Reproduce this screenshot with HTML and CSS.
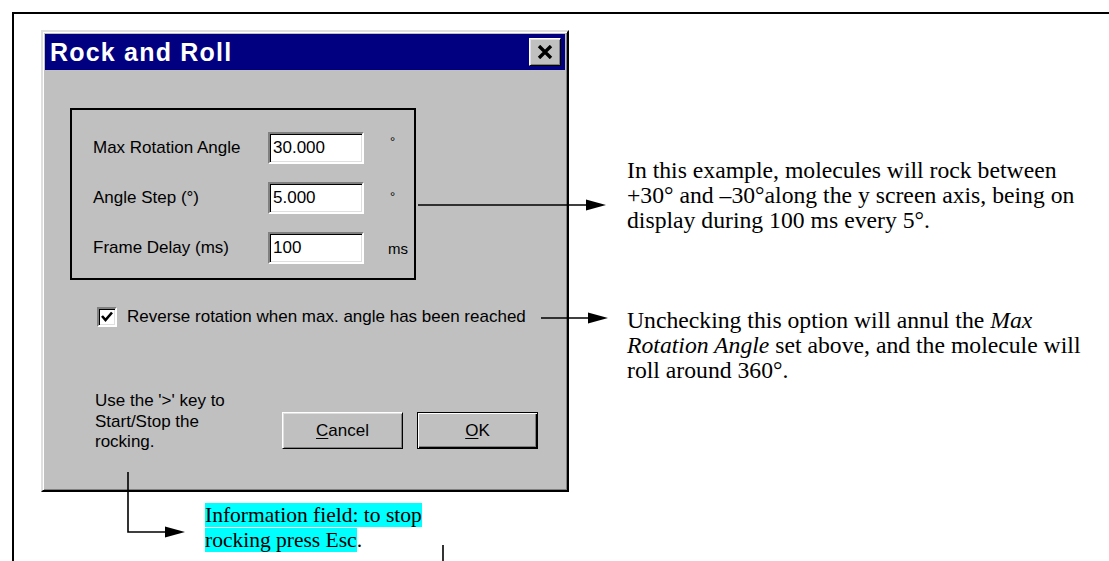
FILE: index.html
```html
<!DOCTYPE html>
<html lang="en">
<head>
  <meta charset="UTF-8" />
  <title>Rock and Roll</title>
  <link rel="stylesheet" href="styles.css">
</head>
<body>
  <div class="page">
    <div class="frame">
      <div class="row">
        <div class="dialog">
          <div class="titlebar">
            <span class="title">Rock and Roll</span>
            <button class="close" type="button">
              <svg width="16" height="14" viewBox="0 0 16 14"><path d="M2 1 L14 13 M14 1 L2 13" stroke="#000" stroke-width="3.4" fill="none"/></svg>
            </button>
          </div>

          <div class="group">
            <label>Max Rotation Angle</label>
            <input class="field" type="text" value="30.000" />
            <span class="unit deg">°</span>

            <label>Angle Step (°)</label>
            <input class="field" type="text" value="5.000" />
            <span class="unit deg deg-low">°</span>

            <label>Frame Delay (ms)</label>
            <input class="field" type="text" value="100" />
            <span class="unit">ms</span>
          </div>

          <div class="check-row">
            <span class="checkbox">
              <svg width="14" height="14" viewBox="0 0 14 14"><path d="M2 6 L5.5 10 L12 2.5" stroke="#000" stroke-width="2.6" fill="none"/></svg>
            </span>
            <span>Reverse rotation when max. angle has been reached</span>
          </div>

          <div class="bottom">
            <p class="info">Use the '&gt;' key to<br>Start/Stop the<br>rocking.</p>
            <div class="buttons">
              <button class="btn" type="button"><u>C</u>ancel</button>
              <button class="btn btn-default" type="button"><u>O</u>K</button>
            </div>
          </div>
        </div>

        <div class="notes">
          <p class="note note-first">In this example, molecules will rock between<br>+30° and –30°along the y screen axis, being on<br>display during 100 ms every 5°.</p>
          <p class="note note-second">Unchecking this option will annul the <i>Max</i><br><i>Rotation Angle</i> set above, and the molecule will<br>roll around 360°.</p>
        </div>
      </div>

      <p class="caption"><span class="mark">Information field: to stop<br>rocking press Esc</span>.</p>

      <!-- callout arrows -->
      <svg class="arrows" width="1109" height="561" viewBox="0 0 1109 561">
        <g stroke="#000" stroke-width="1.6" fill="none">
          <line x1="418" y1="205" x2="590" y2="205"/>
          <line x1="541" y1="318" x2="592" y2="318"/>
          <polyline points="128,472 128,532 168,532"/>
          <line x1="443" y1="545" x2="443" y2="561"/>
        </g>
        <g fill="#000">
          <polygon points="586,199.5 606,205 586,210.5"/>
          <polygon points="588,312.5 608,318 588,323.5"/>
          <polygon points="165,526.5 185,532 165,537.5"/>
        </g>
      </svg>
    </div>
  </div>
</body>
</html>
```

FILE: styles.css
```css
body { margin: 0; background: #fff; font-family: "Liberation Sans", Arial, sans-serif; }
.page { padding: 12px 0 0 12px; }
.frame { position: relative; height: 549px; border-top: 2px solid #000; border-left: 2px solid #000; overflow: hidden; }
.row { display: flex; align-items: flex-start; }

.dialog { margin: 16px 0 0 27px; width: 528px; height: 462px; box-sizing: border-box; background: #c0c0c0; border: 2px solid; border-color: #dfdfdf #000 #000 #dfdfdf; box-shadow: inset 1px 1px #fff, inset -1px -1px #808080; padding: 2px; font-size: 17px; color: #000; }
.titlebar { height: 36px; background: #000080; display: flex; align-items: center; justify-content: space-between; padding: 0 4px 0 5px; }
.title { color: #fff; font-weight: bold; font-size: 25px; letter-spacing: 1.2px; }
.close { width: 32px; height: 28px; padding: 0; display: flex; align-items: center; justify-content: center; background: #c0c0c0; border: 1px solid; border-color: #fff #000 #000 #fff; box-shadow: inset 1px 1px #dfdfdf, inset -1px -1px #808080; }

.group { margin: 38px 0 0 25px; width: 346px; height: 172px; box-sizing: border-box; border: 2px solid #000; padding: 22px 0 0 21px; display: grid; grid-template-columns: 175px 96px auto; grid-auto-rows: 32px; row-gap: 18px; align-items: center; }
.field { width: 96px; height: 32px; box-sizing: border-box; margin: 0; padding: 0 0 0 3px; background: #fff; border: 2px solid; border-color: #808080 #fff #fff #808080; box-shadow: inset 1px 1px #000, inset -1px -1px #dfdfdf; font: 17px "Liberation Sans", Arial, sans-serif; color: #000; outline: none; }
.unit { padding-left: 24px; font-size: 15px; }
.unit.deg { padding-left: 26px; align-self: start; margin-top: 2px; font-size: 13px; }
.unit.deg-low { margin-top: 7px; }

.check-row { margin: 27px 0 0 52px; display: flex; align-items: center; gap: 10px; height: 20px; }
.checkbox { width: 20px; height: 20px; box-sizing: border-box; background: #fff; border: 2px solid; border-color: #808080 #fff #fff #808080; box-shadow: inset 1px 1px #000, inset -1px -1px #dfdfdf; display: flex; align-items: center; justify-content: center; }

.bottom { display: flex; align-items: flex-start; margin-top: 64px; }
.info { margin: 0 0 0 50px; line-height: 20.5px; }
.buttons { display: flex; gap: 14px; margin: 21px 27px 0 auto; }
.btn { width: 121px; height: 37px; padding: 0; background: #c0c0c0; border: 1px solid; border-color: #fff #000 #000 #fff; box-shadow: inset 1px 1px #dfdfdf, inset -1px -1px #808080; font: 17px "Liberation Sans", Arial, sans-serif; color: #000; }
.btn-default { border-color: #000; box-shadow: inset 1px 1px #fff, inset -1px -1px #000, inset -2px -2px #808080; }
.btn u { text-decoration-thickness: 1px; text-underline-offset: 2px; }

.notes { margin-left: 58px; font-family: "Liberation Serif", "Times New Roman", serif; font-size: 23.7px; line-height: 25px; }
.note { margin: 0; white-space: nowrap; }
.note-first { margin-top: 144px; }
.note-second { margin-top: 75px; }

.caption { margin: 11px 0 0 191px; font-family: "Liberation Serif", "Times New Roman", serif; font-size: 21.5px; line-height: 25px; }
.mark { background: #00ffff; }

.arrows { position: absolute; left: -14px; top: -14px; pointer-events: none; }
```
